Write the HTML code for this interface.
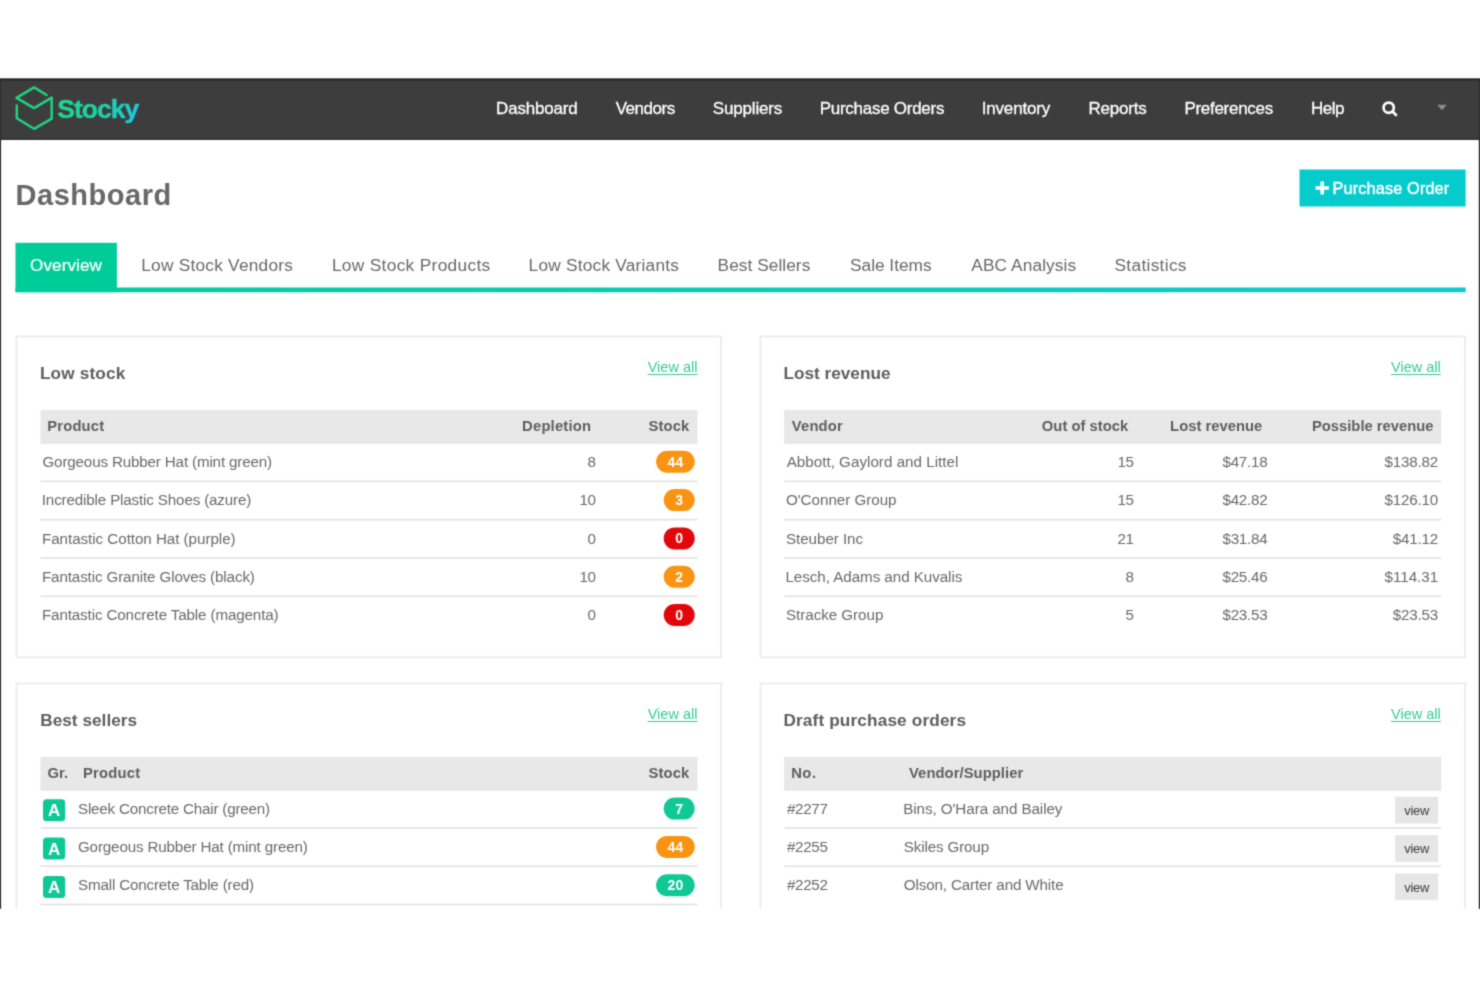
<!DOCTYPE html>
<html><head><meta charset="utf-8"><title>Stocky Dashboard</title>
<style>
html,body{margin:0;padding:0;background:#fff;}
body{width:1480px;height:987px;position:relative;overflow:hidden;font-family:"Liberation Sans",sans-serif;}
.t{position:absolute;white-space:nowrap;line-height:20px;margin:0;}
svg.l{position:absolute;left:0;top:0;}
#wrap{position:absolute;left:0;top:0;width:1480px;height:987px;background:#fff;filter:url(#soft);}
</style></head><body>
<svg width="0" height="0" style="position:absolute"><filter id="soft" x="0" y="0" width="100%" height="100%" color-interpolation-filters="sRGB"><feConvolveMatrix order="3" kernelMatrix="0.0277 0.1110 0.0277 0.1110 0.4452 0.1110 0.0277 0.1110 0.0277" edgeMode="duplicate" preserveAlpha="true"/></filter></svg>
<div id="wrap">
<svg class="l" width="1480" height="987" viewBox="0 0 1480 987"><defs><linearGradient id="lg" x1="0" x2="1" y1="0" y2="0"><stop offset="0" stop-color="#00cc99"/><stop offset="1" stop-color="#0ccacc"/></linearGradient></defs>
<rect x="0.00" y="78.30" width="1480.00" height="830.60" fill="#fff"/>
<rect x="0.00" y="78.30" width="1480.00" height="61.60" fill="#3d3d3d"/>
<rect x="0.00" y="78.30" width="1480.00" height="2.00" fill="#1e1e1f"/>
<rect x="0.00" y="138.40" width="1480.00" height="1.50" fill="#323232"/>
<rect x="0.00" y="78.30" width="1.10" height="830.60" fill="#2e2e2e"/>
<rect x="1478.80" y="78.30" width="1.20" height="830.60" fill="#2e2e2e"/>
<path d="M46.6 95 L34.1 87.4 L16.5 97.9 L34.1 108.1 L51.7 97.6 V118.6 L34.1 128.8 L16.8 118.2 V105.5" fill="none" stroke="#1fd380" stroke-width="2.5" stroke-linejoin="round" stroke-linecap="round"/>
<g transform="translate(1380,99)"><circle cx="8.7" cy="8.7" r="5.15" fill="none" stroke="#fff" stroke-width="2.7"/><path d="M12.5 12.5 L16 16" stroke="#fff" stroke-width="2.8" stroke-linecap="round"/></g>
<path d="M1437.2 104.8 H1446.8 L1442 110.3 Z" fill="#8c8c8c"/>
<rect x="1299.50" y="169.50" width="166.10" height="37.00" fill="#05cbcd"/>
<path d="M1320.4 181.4 h3.6 v4.8 h4.9 v3.6 h-4.9 v4.8 h-3.6 v-4.8 h-4.9 v-3.6 h4.9 z" fill="#fff"/>
<rect x="15.50" y="287.50" width="1450.20" height="4.70" fill="url(#lg)"/>
<rect x="15.50" y="242.80" width="101.40" height="49.40" fill="#00cc99"/>
<rect x="16.40" y="336.40" width="704.70" height="320.80" fill="#fff" stroke="#ebebeb" stroke-width="1.8"/>
<rect x="40.50" y="409.90" width="657.10" height="33.60" fill="#e8e8e8"/>
<rect x="40.50" y="442.50" width="657.10" height="1.00" fill="#e3e3e3"/>
<rect x="656.10" y="450.80" width="38.60" height="22.00" fill="#f89412" rx="11"/>
<rect x="40.50" y="480.55" width="657.10" height="1.70" fill="#e3e3e3"/>
<rect x="663.70" y="489.10" width="31.00" height="22.00" fill="#f89412" rx="11"/>
<rect x="40.50" y="518.85" width="657.10" height="1.70" fill="#e3e3e3"/>
<rect x="663.70" y="527.40" width="31.00" height="22.00" fill="#e2070b" rx="11"/>
<rect x="40.50" y="557.15" width="657.10" height="1.70" fill="#e3e3e3"/>
<rect x="663.70" y="565.70" width="31.00" height="22.00" fill="#f89412" rx="11"/>
<rect x="40.50" y="595.45" width="657.10" height="1.70" fill="#e3e3e3"/>
<rect x="663.70" y="604.00" width="31.00" height="22.00" fill="#e2070b" rx="11"/>
<rect x="760.40" y="336.40" width="704.70" height="320.80" fill="#fff" stroke="#ebebeb" stroke-width="1.8"/>
<rect x="784.10" y="409.90" width="657.10" height="33.60" fill="#e8e8e8"/>
<rect x="784.10" y="442.50" width="657.10" height="1.00" fill="#e3e3e3"/>
<rect x="784.10" y="480.55" width="657.10" height="1.70" fill="#e3e3e3"/>
<rect x="784.10" y="518.85" width="657.10" height="1.70" fill="#e3e3e3"/>
<rect x="784.10" y="557.15" width="657.10" height="1.70" fill="#e3e3e3"/>
<rect x="784.10" y="595.45" width="657.10" height="1.70" fill="#e3e3e3"/>
<rect x="16.40" y="683.40" width="704.70" height="258.20" fill="#fff" stroke="#ebebeb" stroke-width="1.8"/>
<rect x="40.50" y="756.90" width="657.10" height="33.60" fill="#e8e8e8"/>
<rect x="40.50" y="789.50" width="657.10" height="1.00" fill="#e3e3e3"/>
<rect x="43.00" y="799.30" width="22.20" height="22.00" fill="#10c896" rx="3.5"/>
<rect x="663.70" y="797.60" width="31.00" height="22.00" fill="#10c896" rx="11"/>
<rect x="40.50" y="827.05" width="657.10" height="1.70" fill="#e3e3e3"/>
<rect x="43.00" y="837.60" width="22.20" height="22.00" fill="#10c896" rx="3.5"/>
<rect x="656.10" y="835.90" width="38.60" height="22.00" fill="#f89412" rx="11"/>
<rect x="40.50" y="865.35" width="657.10" height="1.70" fill="#e3e3e3"/>
<rect x="43.00" y="875.90" width="22.20" height="22.00" fill="#10c896" rx="3.5"/>
<rect x="656.10" y="874.20" width="38.60" height="22.00" fill="#10c896" rx="11"/>
<rect x="40.50" y="903.65" width="657.10" height="1.70" fill="#e3e3e3"/>
<rect x="760.40" y="683.40" width="704.70" height="258.20" fill="#fff" stroke="#ebebeb" stroke-width="1.8"/>
<rect x="784.10" y="756.90" width="657.10" height="33.60" fill="#e8e8e8"/>
<rect x="784.10" y="789.50" width="657.10" height="1.00" fill="#e3e3e3"/>
<rect x="1395.10" y="796.80" width="43.00" height="26.80" fill="#e6e6e6"/>
<rect x="784.10" y="827.05" width="657.10" height="1.70" fill="#e3e3e3"/>
<rect x="1395.10" y="835.10" width="43.00" height="26.80" fill="#e6e6e6"/>
<rect x="784.10" y="865.35" width="657.10" height="1.70" fill="#e3e3e3"/>
<rect x="1395.10" y="873.40" width="43.00" height="26.80" fill="#e6e6e6"/>
</svg>
<div class="t" style="left:57.34px;top:99.00px;font-size:26.5px;font-weight:700;color:transparent;letter-spacing:-1.000px;padding:6px 2px;margin:-6px -2px;background:linear-gradient(90deg,#1fd58c 0%,#1ed1a6 55%,#1cc8e0 100%);-webkit-background-clip:text;background-clip:text;-webkit-text-stroke:0.5px transparent;">Stocky</div>
<div class="t" style="left:496.11px;top:98.50px;font-size:17px;color:#fff;letter-spacing:-0.185px;-webkit-text-stroke:0.3px #fff;">Dashboard</div>
<div class="t" style="left:615.63px;top:98.50px;font-size:17px;color:#fff;letter-spacing:-0.467px;-webkit-text-stroke:0.3px #fff;">Vendors</div>
<div class="t" style="left:712.83px;top:98.50px;font-size:17px;color:#fff;letter-spacing:-0.174px;-webkit-text-stroke:0.3px #fff;">Suppliers</div>
<div class="t" style="left:819.71px;top:98.50px;font-size:17px;color:#fff;letter-spacing:-0.271px;-webkit-text-stroke:0.3px #fff;">Purchase Orders</div>
<div class="t" style="left:981.73px;top:98.50px;font-size:17px;color:#fff;letter-spacing:-0.179px;-webkit-text-stroke:0.3px #fff;">Inventory</div>
<div class="t" style="left:1088.51px;top:98.50px;font-size:17px;color:#fff;letter-spacing:-0.204px;-webkit-text-stroke:0.3px #fff;">Reports</div>
<div class="t" style="left:1184.41px;top:98.50px;font-size:17px;color:#fff;letter-spacing:-0.286px;-webkit-text-stroke:0.3px #fff;">Preferences</div>
<div class="t" style="left:1310.91px;top:98.50px;font-size:17px;color:#fff;letter-spacing:-0.487px;-webkit-text-stroke:0.3px #fff;">Help</div>
<div class="t" style="left:15.56px;top:185.00px;font-size:29px;font-weight:700;color:#686868;letter-spacing:0.521px;">Dashboard</div>
<div class="t" style="left:1332.56px;top:178.00px;font-size:16.3px;color:#fff;letter-spacing:0.136px;-webkit-text-stroke:0.4px #fff;">Purchase Order</div>
<div class="t" style="left:30.09px;top:255.50px;font-size:17.1px;color:#fff;letter-spacing:0.088px;-webkit-text-stroke:0.2px #fff;">Overview</div>
<div class="t" style="left:141.28px;top:255.00px;font-size:17.3px;color:#686868;letter-spacing:0.232px;">Low Stock Vendors</div>
<div class="t" style="left:331.88px;top:255.00px;font-size:17.3px;color:#686868;letter-spacing:0.330px;">Low Stock Products</div>
<div class="t" style="left:528.58px;top:255.00px;font-size:17.3px;color:#686868;letter-spacing:0.218px;">Low Stock Variants</div>
<div class="t" style="left:717.58px;top:255.00px;font-size:17.3px;color:#686868;letter-spacing:0.048px;">Best Sellers</div>
<div class="t" style="left:850.01px;top:255.00px;font-size:17.3px;color:#686868;letter-spacing:-0.003px;">Sale Items</div>
<div class="t" style="left:971.37px;top:255.00px;font-size:17.3px;color:#686868;letter-spacing:0.093px;">ABC Analysis</div>
<div class="t" style="left:1114.51px;top:255.00px;font-size:17.3px;color:#686868;letter-spacing:0.317px;">Statistics</div>
<div class="t" style="left:39.95px;top:363.00px;font-size:17.2px;font-weight:700;color:#5e5e5e;letter-spacing:0.161px;">Low stock</div>
<div class="t" style="right:782.48px;top:357.00px;font-size:14.5px;color:#38c99b;letter-spacing:0.019px;text-decoration:underline;text-decoration-thickness:1.2px;text-underline-offset:2px;">View all</div>
<div class="t" style="left:47.21px;top:416.00px;font-size:14.8px;font-weight:700;color:#5e5e5e;letter-spacing:0.177px;">Product</div>
<div class="t" style="right:888.80px;top:416.00px;font-size:14.8px;font-weight:700;color:#5e5e5e;letter-spacing:0.186px;">Depletion</div>
<div class="t" style="right:790.59px;top:416.00px;font-size:14.8px;font-weight:700;color:#5e5e5e;letter-spacing:0.129px;">Stock</div>
<div class="t" style="left:42.44px;top:451.50px;font-size:15.2px;color:#6a6a6a;letter-spacing:-0.161px;">Gorgeous Rubber Hat (mint green)</div>
<div class="t" style="right:884.10px;top:451.50px;font-size:15.2px;color:#6a6a6a;">8</div>
<div class="t" style="left:656.10px;top:451px;width:38.6px;line-height:22px;color:#fff;font-weight:700;font-size:14px;text-align:center">44</div>
<div class="t" style="left:41.80px;top:489.50px;font-size:15.2px;color:#6a6a6a;letter-spacing:-0.157px;">Incredible Plastic Shoes (azure)</div>
<div class="t" style="right:884.50px;top:489.50px;font-size:15.2px;color:#6a6a6a;letter-spacing:-0.398px;">10</div>
<div class="t" style="left:663.70px;top:489px;width:31px;line-height:22px;color:#fff;font-weight:700;font-size:14px;text-align:center">3</div>
<div class="t" style="left:41.95px;top:528.50px;font-size:15.2px;color:#6a6a6a;letter-spacing:-0.047px;">Fantastic Cotton Hat (purple)</div>
<div class="t" style="right:884.10px;top:528.50px;font-size:15.2px;color:#6a6a6a;">0</div>
<div class="t" style="left:663.70px;top:527px;width:31px;line-height:22px;color:#fff;font-weight:700;font-size:14px;text-align:center">0</div>
<div class="t" style="left:41.95px;top:566.50px;font-size:15.2px;color:#6a6a6a;letter-spacing:-0.127px;">Fantastic Granite Gloves (black)</div>
<div class="t" style="right:884.50px;top:566.50px;font-size:15.2px;color:#6a6a6a;letter-spacing:-0.398px;">10</div>
<div class="t" style="left:663.70px;top:566px;width:31px;line-height:22px;color:#fff;font-weight:700;font-size:14px;text-align:center">2</div>
<div class="t" style="left:41.95px;top:604.50px;font-size:15.2px;color:#6a6a6a;letter-spacing:-0.135px;">Fantastic Concrete Table (magenta)</div>
<div class="t" style="right:884.10px;top:604.50px;font-size:15.2px;color:#6a6a6a;">0</div>
<div class="t" style="left:663.70px;top:604px;width:31px;line-height:22px;color:#fff;font-weight:700;font-size:14px;text-align:center">0</div>
<div class="t" style="left:783.45px;top:363.00px;font-size:17.2px;font-weight:700;color:#5e5e5e;letter-spacing:0.006px;">Lost revenue</div>
<div class="t" style="right:39.18px;top:357.00px;font-size:14.5px;color:#38c99b;letter-spacing:0.019px;text-decoration:underline;text-decoration-thickness:1.2px;text-underline-offset:2px;">View all</div>
<div class="t" style="left:791.80px;top:416.00px;font-size:14.8px;font-weight:700;color:#5e5e5e;letter-spacing:0.165px;">Vendor</div>
<div class="t" style="right:351.81px;top:416.00px;font-size:14.8px;font-weight:700;color:#5e5e5e;letter-spacing:0.001px;">Out of stock</div>
<div class="t" style="right:217.69px;top:416.00px;font-size:14.8px;font-weight:700;color:#5e5e5e;letter-spacing:0.008px;">Lost revenue</div>
<div class="t" style="right:46.50px;top:416.00px;font-size:14.8px;font-weight:700;color:#5e5e5e;letter-spacing:-0.009px;">Possible revenue</div>
<div class="t" style="left:786.67px;top:451.50px;font-size:15.2px;color:#6a6a6a;letter-spacing:0.014px;">Abbott, Gaylord and Littel</div>
<div class="t" style="right:346.40px;top:451.50px;font-size:15.2px;color:#6a6a6a;letter-spacing:-0.397px;">15</div>
<div class="t" style="right:212.53px;top:451.50px;font-size:15.2px;color:#6a6a6a;letter-spacing:-0.233px;">$47.18</div>
<div class="t" style="right:42.13px;top:451.50px;font-size:15.2px;color:#6a6a6a;letter-spacing:-0.231px;">$138.82</div>
<div class="t" style="left:785.98px;top:489.50px;font-size:15.2px;color:#6a6a6a;letter-spacing:-0.032px;">O&#x27;Conner Group</div>
<div class="t" style="right:346.40px;top:489.50px;font-size:15.2px;color:#6a6a6a;letter-spacing:-0.397px;">15</div>
<div class="t" style="right:212.53px;top:489.50px;font-size:15.2px;color:#6a6a6a;letter-spacing:-0.232px;">$42.82</div>
<div class="t" style="right:42.13px;top:489.50px;font-size:15.2px;color:#6a6a6a;letter-spacing:-0.231px;">$126.10</div>
<div class="t" style="left:786.01px;top:528.50px;font-size:15.2px;color:#6a6a6a;letter-spacing:-0.060px;">Steuber Inc</div>
<div class="t" style="right:346.40px;top:528.50px;font-size:15.2px;color:#6a6a6a;letter-spacing:-0.404px;">21</div>
<div class="t" style="right:212.53px;top:528.50px;font-size:15.2px;color:#6a6a6a;letter-spacing:-0.234px;">$31.84</div>
<div class="t" style="right:42.13px;top:528.50px;font-size:15.2px;color:#6a6a6a;letter-spacing:-0.232px;">$41.12</div>
<div class="t" style="left:785.45px;top:566.50px;font-size:15.2px;color:#6a6a6a;letter-spacing:-0.054px;">Lesch, Adams and Kuvalis</div>
<div class="t" style="right:346.00px;top:566.50px;font-size:15.2px;color:#6a6a6a;">8</div>
<div class="t" style="right:212.53px;top:566.50px;font-size:15.2px;color:#6a6a6a;letter-spacing:-0.233px;">$25.46</div>
<div class="t" style="right:41.94px;top:566.50px;font-size:15.2px;color:#6a6a6a;letter-spacing:-0.043px;">$114.31</div>
<div class="t" style="left:786.01px;top:604.50px;font-size:15.2px;color:#6a6a6a;letter-spacing:-0.049px;">Stracke Group</div>
<div class="t" style="right:346.00px;top:604.50px;font-size:15.2px;color:#6a6a6a;">5</div>
<div class="t" style="right:212.53px;top:604.50px;font-size:15.2px;color:#6a6a6a;letter-spacing:-0.233px;">$23.53</div>
<div class="t" style="right:42.13px;top:604.50px;font-size:15.2px;color:#6a6a6a;letter-spacing:-0.233px;">$23.53</div>
<div class="t" style="left:40.25px;top:710.00px;font-size:17.2px;font-weight:700;color:#5e5e5e;letter-spacing:0.031px;">Best sellers</div>
<div class="t" style="right:782.48px;top:704.00px;font-size:14.5px;color:#38c99b;letter-spacing:0.019px;text-decoration:underline;text-decoration-thickness:1.2px;text-underline-offset:2px;">View all</div>
<div class="t" style="left:47.59px;top:763.00px;font-size:14.8px;font-weight:700;color:#5e5e5e;letter-spacing:0.032px;">Gr.</div>
<div class="t" style="left:83.01px;top:763.00px;font-size:14.8px;font-weight:700;color:#5e5e5e;letter-spacing:0.211px;">Product</div>
<div class="t" style="right:790.59px;top:763.00px;font-size:14.8px;font-weight:700;color:#5e5e5e;letter-spacing:0.129px;">Stock</div>
<div class="t" style="left:43px;top:799px;width:22.2px;line-height:23px;color:#fff;font-weight:700;font-size:17px;text-align:center">A</div>
<div class="t" style="left:78.01px;top:798.50px;font-size:15.2px;color:#6a6a6a;letter-spacing:-0.200px;">Sleek Concrete Chair (green)</div>
<div class="t" style="left:663.70px;top:798px;width:31px;line-height:22px;color:#fff;font-weight:700;font-size:14px;text-align:center">7</div>
<div class="t" style="left:43px;top:838px;width:22.2px;line-height:23px;color:#fff;font-weight:700;font-size:17px;text-align:center">A</div>
<div class="t" style="left:77.94px;top:836.50px;font-size:15.2px;color:#6a6a6a;letter-spacing:-0.154px;">Gorgeous Rubber Hat (mint green)</div>
<div class="t" style="left:656.10px;top:836px;width:38.6px;line-height:22px;color:#fff;font-weight:700;font-size:14px;text-align:center">44</div>
<div class="t" style="left:43px;top:876px;width:22.2px;line-height:23px;color:#fff;font-weight:700;font-size:17px;text-align:center">A</div>
<div class="t" style="left:78.01px;top:874.50px;font-size:15.2px;color:#6a6a6a;letter-spacing:-0.173px;">Small Concrete Table (red)</div>
<div class="t" style="left:656.10px;top:874px;width:38.6px;line-height:22px;color:#fff;font-weight:700;font-size:14px;text-align:center">20</div>
<div class="t" style="left:783.45px;top:710.00px;font-size:17.2px;font-weight:700;color:#5e5e5e;letter-spacing:0.149px;">Draft purchase orders</div>
<div class="t" style="right:39.18px;top:704.00px;font-size:14.5px;color:#38c99b;letter-spacing:0.019px;text-decoration:underline;text-decoration-thickness:1.2px;text-underline-offset:2px;">View all</div>
<div class="t" style="left:791.21px;top:763.00px;font-size:14.8px;font-weight:700;color:#5e5e5e;letter-spacing:0.483px;">No.</div>
<div class="t" style="left:909.00px;top:763.00px;font-size:14.8px;font-weight:700;color:#5e5e5e;letter-spacing:0.054px;">Vendor/Supplier</div>
<div class="t" style="left:786.93px;top:798.50px;font-size:15.2px;color:#6a6a6a;letter-spacing:-0.301px;">#2277</div>
<div class="t" style="left:903.25px;top:798.50px;font-size:15.2px;color:#6a6a6a;letter-spacing:-0.072px;">Bins, O&#x27;Hara and Bailey</div>
<div class="t" style="left:1404.16px;top:800.50px;font-size:12.9px;color:#3c3c3c;letter-spacing:-0.195px;">view</div>
<div class="t" style="left:786.93px;top:836.50px;font-size:15.2px;color:#6a6a6a;letter-spacing:-0.332px;">#2255</div>
<div class="t" style="left:903.81px;top:836.50px;font-size:15.2px;color:#6a6a6a;letter-spacing:-0.148px;">Skiles Group</div>
<div class="t" style="left:1404.16px;top:838.50px;font-size:12.9px;color:#3c3c3c;letter-spacing:-0.195px;">view</div>
<div class="t" style="left:786.93px;top:874.50px;font-size:15.2px;color:#6a6a6a;letter-spacing:-0.301px;">#2252</div>
<div class="t" style="left:903.78px;top:874.50px;font-size:15.2px;color:#6a6a6a;letter-spacing:-0.139px;">Olson, Carter and White</div>
<div class="t" style="left:1404.16px;top:877.50px;font-size:12.9px;color:#3c3c3c;letter-spacing:-0.195px;">view</div>
<svg class="l" width="1480" height="987" viewBox="0 0 1480 987">
<rect x="0.00" y="908.90" width="1480.00" height="80.00" fill="#fff"/>
<rect x="0.00" y="0.00" width="1480.00" height="78.30" fill="#fff"/>
</svg>
</div></body></html>
